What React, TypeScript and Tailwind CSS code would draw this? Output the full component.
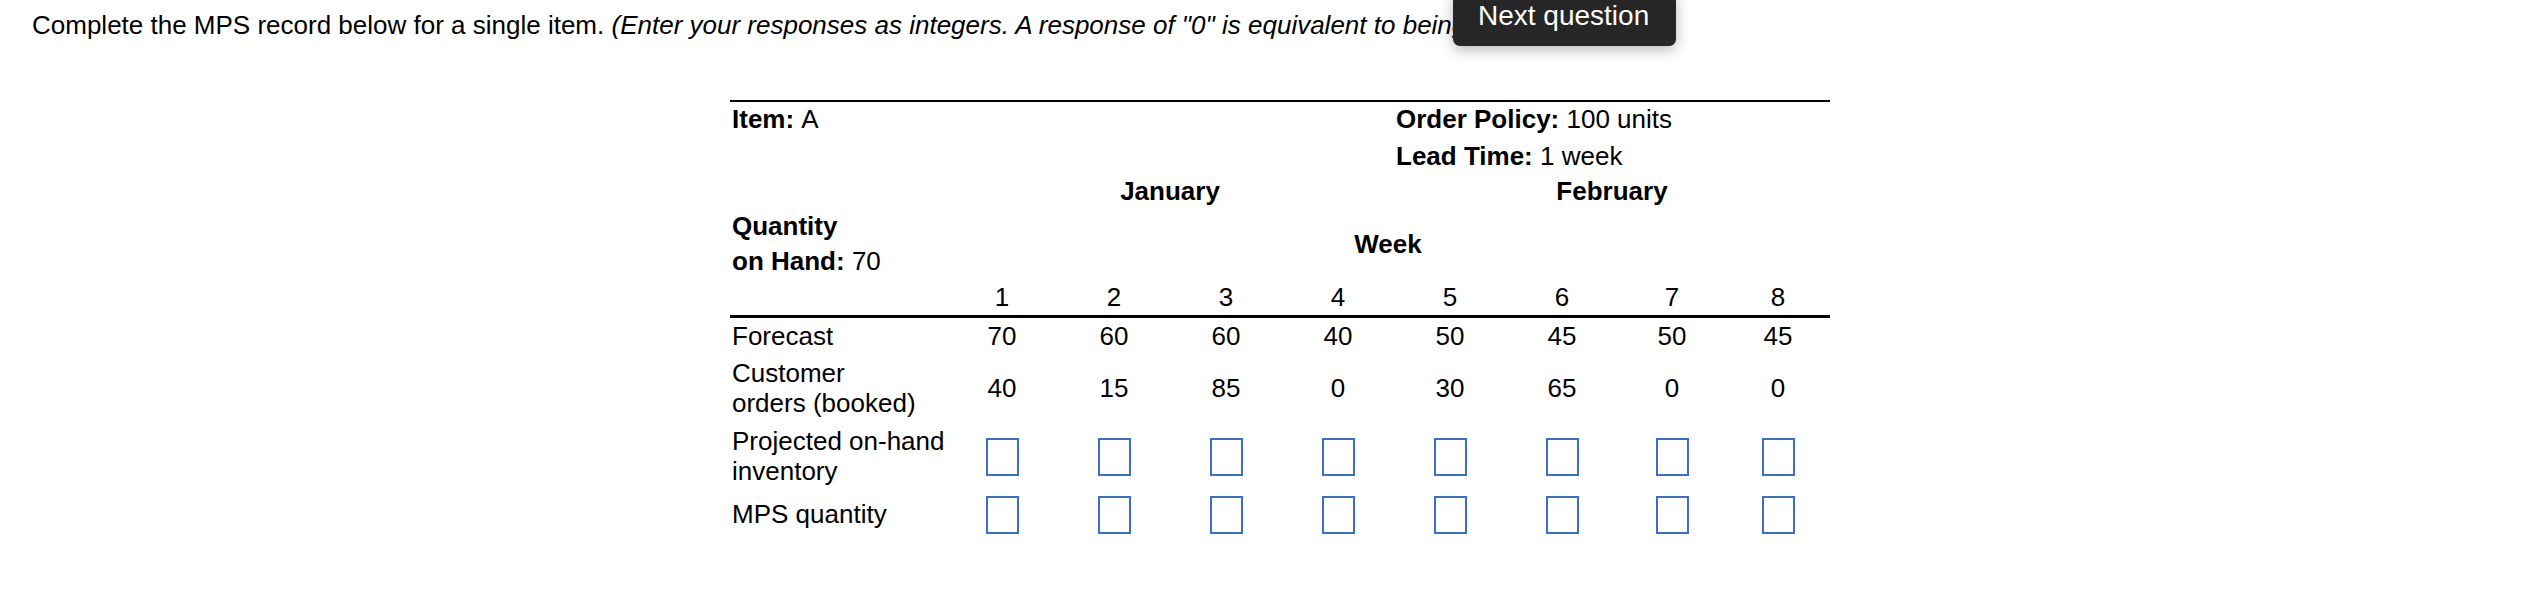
import React from "react";

const weeks = [1, 2, 3, 4, 5, 6, 7, 8];
const forecast = [70, 60, 60, 40, 50, 45, 50, 45];
const booked = [40, 15, 85, 0, 30, 65, 0, 0];

const cols = "grid grid-cols-[216px_112px_112px_112px_112px_112px_112px_108px_104px]";

const AnswerBox = ({ label }: { label: string }) => (
    <input
        type="text"
        aria-label={label}
        className="w-[33px] h-[38px] border-2 border-[#3b6ecc] bg-white outline-none"
    />
);

export default function App() {
    return (
        <div className="relative min-h-screen bg-white text-black font-['Liberation_Sans',Arial,sans-serif] text-[26px]">
            <p className="pl-8 pt-[10px] leading-[30px] whitespace-nowrap">
                Complete the MPS record below for a single item.{" "}
                <i>(Enter your responses as integers. A response of "0" is equivalent to being left blank.)</i>
            </p>

            <div className="ml-[730px] mt-[60px] w-[1100px]">
                {/* header block */}
                <div className={`${cols} grid-rows-[35px_36px_34px_72px_36px] border-t-2 border-b-[3px] border-black`}>
                    <div className="col-span-5 flex items-center pl-[2px]">
                        <b>Item:</b>&nbsp;A
                    </div>
                    <div className="col-span-4 flex items-center pl-[2px] whitespace-nowrap">
                        <b>Order Policy:</b>&nbsp;100 units
                    </div>

                    <div className="col-span-5" />
                    <div className="col-span-4 flex items-center pl-[2px] pt-[2px] whitespace-nowrap">
                        <b>Lead Time:</b>&nbsp;1 week
                    </div>

                    <div />
                    <div className="col-span-4 flex items-center justify-center pt-[2px] font-bold">January</div>
                    <div className="col-span-4 flex items-center justify-center pt-[2px] font-bold">February</div>

                    <div className="flex items-center pl-[2px] pt-[2px] leading-[35px] whitespace-nowrap">
                        <div>
                            <b>Quantity</b>
                            <br />
                            <b>on Hand:</b> 70
                        </div>
                    </div>
                    <div className="col-span-8 flex items-center justify-center pt-[2px] font-bold">Week</div>

                    <div />
                    {weeks.map((w) => (
                        <div key={w} className="flex items-center justify-center">
                            {w}
                        </div>
                    ))}
                </div>

                {/* body */}
                <div className={`${cols} grid-rows-[35px_69px_66px_52px] leading-[30px]`}>
                    <div className="flex items-center pl-[2px]">Forecast</div>
                    {forecast.map((v, i) => (
                        <div key={i} className="flex items-center justify-center">
                            {v}
                        </div>
                    ))}

                    <div className="flex items-center pl-[2px] whitespace-nowrap">
                        <div>
                            Customer
                            <br />
                            orders (booked)
                        </div>
                    </div>
                    {booked.map((v, i) => (
                        <div key={i} className="flex items-center justify-center pt-[1px]">
                            {v}
                        </div>
                    ))}

                    <div className="flex items-center pl-[2px] pt-[2px] whitespace-nowrap">
                        <div>
                            Projected on-hand
                            <br />
                            inventory
                        </div>
                    </div>
                    {weeks.map((w) => (
                        <div key={w} className="flex items-center justify-center pt-[3px]">
                            <AnswerBox label={`Projected on-hand inventory week ${w}`} />
                        </div>
                    ))}

                    <div className="flex items-center pl-[2px] whitespace-nowrap">MPS quantity</div>
                    {weeks.map((w) => (
                        <div key={w} className="flex items-center justify-center pt-[1px]">
                            <AnswerBox label={`MPS quantity week ${w}`} />
                        </div>
                    ))}
                </div>
            </div>

            {/* tooltip over the instructions */}
            <div className="absolute left-[1453px] top-[-8px] w-[223px] h-[54px] rounded-[7px] bg-[#262626] pl-[25px] pt-[8px] text-white text-[28px] leading-[32px] whitespace-nowrap shadow-[0_4px_14px_rgba(0,0,0,0.28)]">
                Next question
            </div>
        </div>
    );
}
